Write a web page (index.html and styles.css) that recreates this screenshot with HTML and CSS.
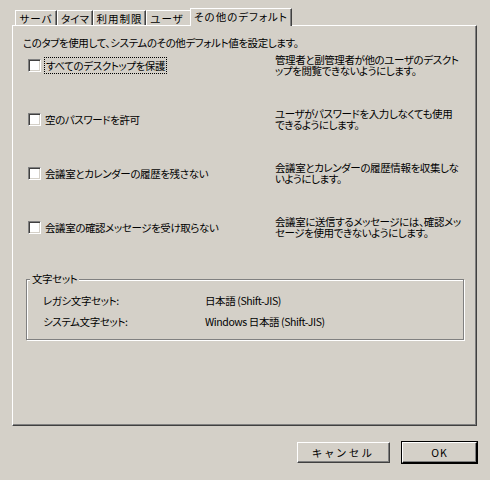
FILE: index.html
```html
<!DOCTYPE html>
<html lang="ja">

<head>
    <meta charset="utf-8">
    <title>その他のデフォルト</title>
    <link rel="stylesheet" href="styles.css">
</head>

<body>
    <div class="dialog">
        <!-- fanerne -->
        <nav class="tabs">
            <span class="tab">サーバ</span>
            <span class="tab">タイマ</span>
            <span class="tab">利用制限</span>
            <span class="tab">ユーザ</span>
            <span class="tab valgt">その他のデフォルト</span>
        </nav>

        <section class="panel">
            <p class="intro">このタブを使用して、システムのその他デフォルト値を設定します。</p>

            <div class="options">
                <div class="option">
                    <label class="check"><span class="box"></span><span class="focus">すべてのデスクトップを保護</span></label>
                    <p class="desc">管理者と副管理者が他のユーザのデスクトップを閲覧できないようにします。</p>
                </div>
                <div class="option">
                    <label class="check"><span class="box"></span><span>空のパスワードを許可</span></label>
                    <p class="desc">ユーザがパスワードを入力しなくても使用できるようにします。</p>
                </div>
                <div class="option">
                    <label class="check"><span class="box"></span><span>会議室とカレンダーの履歴を残さない</span></label>
                    <p class="desc">会議室とカレンダーの履歴情報を収集しないようにします。</p>
                </div>
                <div class="option">
                    <label class="check"><span class="box"></span><span>会議室の確認メッセージを受け取らない</span></label>
                    <p class="desc">会議室に送信するメッセージには、確認メッセージを使用できないようにします。</p>
                </div>
            </div>

            <div class="group">
                <span class="legend">文字セット</span>
                <div class="group-row">
                    <span>レガシ文字セット:</span>
                    <span>日本語 (Shift-JIS)</span>
                </div>
                <div class="group-row">
                    <span>システム文字セット:</span>
                    <span>Windows 日本語 (Shift-JIS)</span>
                </div>
            </div>
        </section>

        <div class="buttons">
            <button class="btn">キャンセル</button>
            <button class="btn default">OK</button>
        </div>
    </div>
</body>

</html>
```

FILE: styles.css
```css
body {
    margin: 0;
    background-color: #d4d0c8;
    font-family: "Noto Sans CJK JP", "DejaVu Sans", sans-serif;
    font-size: 10.5px;
    letter-spacing: -0.4px;
    font-feature-settings: "palt";
    color: #000;
}

p {
    margin: 0;
}

.dialog {
    width: 490px;
    height: 480px;
    box-sizing: border-box;
    padding: 8px 13px 0 12px;
}

/* fanerne */
.tabs {
    display: flex;
    align-items: flex-end;
    padding-left: 3px;
    height: 17px;
}

.tab {
    box-sizing: border-box;
    height: 15px;
    line-height: 15px;
    text-align: center;
    border-top: 1px solid #fff;
    border-left: 1px solid #fff;
    border-right: 1px solid #404040;
    box-shadow: inset -1px 0 0 #808080;
    white-space: nowrap;
    letter-spacing: 1px;
}

.tab:nth-child(1) {
    width: 42px;
}

.tab:nth-child(2) {
    width: 36px;
    letter-spacing: 0;
}

.tab:nth-child(3) {
    width: 53px;
}

.tab:nth-child(4) {
    width: 46px;
    padding-right: 4px;
}

.tab.valgt {
    position: relative;
    z-index: 2;
    width: 102px;
    height: 18px;
    line-height: 16px;
    margin: 0 -2px -1px -2px;
    background-color: #d4d0c8;
}

.panel {
    height: 401px;
    box-sizing: border-box;
    border-top: 1px solid #fff;
    border-left: 1px solid #fff;
    border-right: 1px solid #404040;
    border-bottom: 1px solid #404040;
    box-shadow: inset -1px -1px 0 #808080;
    padding: 11px 10px 0 10px;
}

.intro {
    line-height: 12px;
}

.options {
    display: flex;
    flex-direction: column;
    gap: 32px;
    margin: 5px 0 0 5px;
}

.option {
    display: grid;
    grid-template-columns: 247px 1fr;
    align-items: center;
}

.check {
    display: flex;
    align-items: center;
    gap: 4px;
}

.box {
    width: 13px;
    height: 13px;
    box-sizing: border-box;
    background-color: #fff;
    border-top: 1px solid #808080;
    border-left: 1px solid #808080;
    border-right: 1px solid #fff;
    border-bottom: 1px solid #fff;
    box-shadow: inset 1px 1px 0 #404040, inset -1px -1px 0 #d4d0c8;
}

.focus {
    outline: 1px dotted #000;
    padding: 0 1px;
}

.desc {
    width: 186px;
    line-height: 11px;
}

/* tegnsæt gruppe */
.group {
    position: relative;
    width: 438px;
    height: 61px;
    box-sizing: border-box;
    margin: 41px 0 0 3px;
    border: 1px solid #808080;
    box-shadow: inset 1px 1px 0 #fff, 1px 1px 0 #fff;
    padding: 14px 0 0 16px;
}

.legend {
    position: absolute;
    top: -7px;
    left: 3px;
    padding: 0 2px;
    line-height: 12px;
    background-color: #d4d0c8;
}

.group-row {
    display: grid;
    grid-template-columns: 162px 1fr;
    height: 21px;
    line-height: 14px;
}

.buttons {
    display: flex;
    justify-content: flex-end;
    gap: 12px;
    margin-top: 16px;
}

.btn {
    font-family: inherit;
    font-size: 10.5px;
    font-feature-settings: "palt";
    width: 93px;
    height: 21px;
    padding: 0;
    background-color: #d4d0c8;
    color: #000;
    border-top: 1px solid #fff;
    border-left: 1px solid #fff;
    border-right: 1px solid #404040;
    border-bottom: 1px solid #404040;
    box-shadow: inset -1px -1px 0 #808080;
    letter-spacing: 3px;
}

.btn.default {
    width: 75px;
    outline: 1px solid #000;
    border-right-color: #000;
    border-bottom-color: #000;
    letter-spacing: 1px;
}
```
